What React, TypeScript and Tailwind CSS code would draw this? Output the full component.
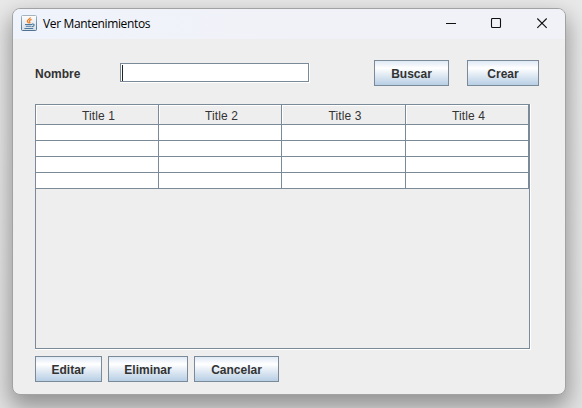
import React from 'react';

function SwingButton({ label, className }: { label: string; className: string }) {
  return (
    <button
      className={`flex h-[26px] shrink-0 items-center justify-center border border-[#7a8a99] bg-[linear-gradient(180deg,#dfe9f4_0%,#ffffff_30%,#dfe9f3_60%,#b8cfe5_100%)] pt-px text-[12px] leading-[14px] font-bold text-[#333333] ${className}`}
    >
      {label}
    </button>
  );
}

function JavaIcon() {
  return (
    <svg className="mb-[2px]" width="16" height="16" viewBox="0 0 16 16" fill="none">
      <defs>
        <linearGradient id="tile" x1="0" y1="0" x2="0" y2="1">
          <stop offset="0" stopColor="#fdfdfd" />
          <stop offset="1" stopColor="#d5dfe7" />
        </linearGradient>
        <linearGradient id="edge" x1="0" y1="0" x2="0" y2="1">
          <stop offset="0" stopColor="#a3b3c0" />
          <stop offset="1" stopColor="#4f7290" />
        </linearGradient>
      </defs>
      <rect x=".5" y=".5" width="15" height="15" rx="1" fill="url(#tile)" stroke="url(#edge)" />
      <path d="M9.2 2.4C9.6 4 5.9 4.6 6.4 6.3c.2.9 1 1.3 1.2 2M10.6 4.4C8.6 5.2 7.8 6 8.7 7c.4.6.2 1-.1 1.5" stroke="#ee7f22" strokeWidth="1.3" />
      <path d="M4 9.5h7M4.8 11.2h5.6M3.4 13.5h8.8M11 9.1c2.9-.6 2.9 2-.2 2.6" stroke="#4b789e" strokeWidth="1.1" />
    </svg>
  );
}

const titles = ['Title 1', 'Title 2', 'Title 3', 'Title 4'];
const columns = 'grid grid-cols-[123px_123px_124px_123px]';

export default function App() {
  return (
    <div className="h-[408px] w-[582px] overflow-hidden bg-[linear-gradient(180deg,#e9e9e9,#e2e2e2)] pt-2 pl-3 font-['Liberation_Sans',Arial,sans-serif] text-[#333333]">
      <div className="flex h-[387px] w-[554px] flex-col overflow-hidden rounded-[8px] border border-[#a2a2a2] bg-[#eeeeee] shadow-[0_10px_22px_2px_rgba(0,0,0,0.36)]">
        <header className="flex h-[30px] shrink-0 items-center bg-[linear-gradient(90deg,#eff3fb,#f1f2f8_50%)] pl-2">
          <JavaIcon />
          <span className="ml-[6px] w-[120px] font-['Open_Sans','Noto_Sans',sans-serif] text-[12px] leading-4 tracking-[-0.36px] whitespace-nowrap text-black">
            Ver Mantenimientos
          </span>
          <svg className="mr-[17px] ml-auto" width="102" height="12" viewBox="0 0 102 12" fill="none" stroke="#111111">
            <path d="M0 5.5h10" />
            <rect x="45.5" y=".5" width="9" height="9" rx="1" strokeWidth="1.1" />
            <path d="M91.3 .5l9.4 9.4M100.7 .5l-9.4 9.4" strokeWidth="1.1" />
          </svg>
        </header>

        <main className="flex flex-1 flex-col pt-[21px] pl-[22px]">
          <div className="flex h-[26px] items-center">
            <label className="w-[85px] pt-px text-[12px] leading-[14px] font-bold">Nombre</label>
            <div className="flex h-5 w-[190px] border-r border-b border-white">
              <div className="flex h-[19px] w-[189px] border border-[#7a8a99] bg-white pt-px pl-px">
                <span className="h-4 w-px bg-[#222222]" />
              </div>
            </div>
            <SwingButton label="Buscar" className="ml-16 w-[75px]" />
            <SwingButton label="Crear" className="ml-[18px] w-[72px]" />
          </div>

          <div className="mt-[18px] h-[246px] w-[496px] border-r border-b border-white">
            <div className="h-[245px] w-[495px] border border-[#7a8a99]">
              <div className={columns}>
                {titles.map((title) => (
                  <div key={title} className="h-5 border-r border-b border-[#7a8a99]">
                    <div className="h-[19px] border-t border-l border-white pt-[3px] pl-[2px] text-center text-[12px] leading-[14px] tracking-[0.1px]">
                      {title}
                    </div>
                  </div>
                ))}
              </div>
              {[1, 2, 3, 4].map((row) => (
                <div key={row} className={columns}>
                  {titles.map((title) => (
                    <div key={title} className="h-4 border-r border-b border-[#7a8a99] bg-white" />
                  ))}
                </div>
              ))}
            </div>
          </div>

          <div className="mt-[6px] flex gap-[6px]">
            <SwingButton label="Editar" className="w-[67px]" />
            <SwingButton label="Eliminar" className="w-20" />
            <SwingButton label="Cancelar" className="w-[85px]" />
          </div>
        </main>
      </div>
    </div>
  );
}
